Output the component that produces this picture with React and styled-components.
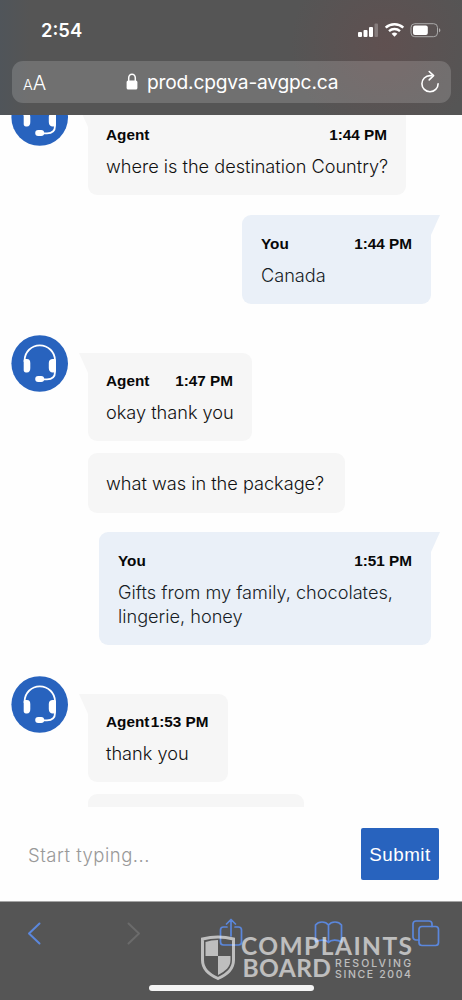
import React from "react";
import styled, { createGlobalStyle } from "styled-components";

const GlobalStyle = createGlobalStyle`
  * {
    box-sizing: border-box;
  }

  body {
    margin: 0;
    background: #fff;
    font-family: "Liberation Sans", Arial, sans-serif;
  }
`;

const Phone = styled.div`
  position: relative;
  display: flex;
  flex-direction: column;
  width: 462px;
  height: 1000px;
  overflow: hidden;
  background: #fefefe;
`;

const TopBar = styled.header`
  flex: none;
  height: 115px;
  padding: 0 11px 0 12px;
  color: #fff;
  background:
    radial-gradient(circle at 385px 45px, rgba(120, 70, 70, 0.3), transparent 95px),
    linear-gradient(90deg, #50555a 0, #555 30px, #555 100%);
  font-family: Inter, sans-serif;
`;

const StatusBar = styled.div`
  display: flex;
  align-items: center;
  justify-content: space-between;
  height: 60px;
  padding: 0 10px 0 29px;
`;

const Clock = styled.div`
  font-size: 18.4px;
  font-weight: 600;
`;

const StatusIcons = styled.div`
  display: flex;
`;

const AddressBar = styled.div`
  display: flex;
  align-items: center;
  height: 42px;
  margin-top: 1px;
  padding: 0 10px 0 11px;
  border-radius: 11px;
  background: rgba(255, 255, 255, 0.16);
`;

const TextSize = styled.div`
  width: 103px;
  padding-top: 1px;
  font-size: 20px;
  font-weight: 300;

  small {
    font-size: 14.5px;
  }
`;

const Url = styled.div`
  flex: 1;
  margin-left: 9px;
  font-size: 19.2px;
  letter-spacing: -0.2px;
`;

const Chat = styled.main`
  flex: none;
  height: 692px;
  overflow: hidden;
`;

const Group = styled.div`
  display: flex;
  margin-top: ${(props) => props.$top}px;
  padding-left: 11px;
`;

const Bubbles = styled.div`
  display: flex;
  flex-direction: column;
  gap: 11.5px;
  margin: 18px 0 0 20px;
`;

const Bubble = styled.div`
  position: relative;
  width: ${(props) => props.$width}px;
  padding: 16px 19px 17px 18px;
  border-radius: 9px;
  background: #f6f6f6;
  color: #111;

  &::before {
    content: "";
    display: ${(props) => (props.$tail ? "block" : "none")};
    position: absolute;
    top: 0;
    left: -9px;
    width: 24px;
    height: 20px;
    background: inherit;
    clip-path: polygon(0 0, 100% 0, 100% 100%, 9px 100%);
  }
`;

const UserBubble = styled(Bubble)`
  margin: ${(props) => props.$top}px 31px 0 auto;
  padding: 17px 19px 17px;
  background: #eaf0f8;
  color: #171d26;

  &::before {
    left: auto;
    right: -9px;
    clip-path: polygon(0 0, 100% 0, 15px 100%, 0 100%);
  }
`;

const Meta = styled.div`
  position: relative;
  display: flex;
  justify-content: space-between;
  margin-bottom: 7px;
  font-size: 15.3px;
  font-weight: 700;
  line-height: 24px;
  white-space: nowrap;
  color: #080808;
`;

const Message = styled.div`
  padding: ${(props) => (props.$single ? "2px 0 1px" : 0)};
  font-family: Inter, "Liberation Sans", sans-serif;
  font-size: 18.15px;
  font-weight: 300;
  line-height: 24px;
  white-space: pre;
`;

const Form = styled.form`
  display: flex;
  flex: none;
  align-items: center;
  height: 95px;
  padding: 0 23px 0 28px;
  border-bottom: 1px solid #a5a5a5;
  background: #fefefe;
`;

const Input = styled.input`
  flex: 1;
  min-width: 0;
  padding: 2px 0 0;
  border: 0;
  outline: 0;
  background: none;
  font-family: Inter, "Liberation Sans", sans-serif;
  font-size: 18.5px;
  font-weight: 300;
  letter-spacing: 0.5px;

  &::placeholder {
    color: #999;
  }
`;

const Submit = styled.button`
  width: 78px;
  height: 52px;
  padding: 2px 0 0;
  border: 0;
  border-radius: 2px;
  background: #2863be;
  color: #fff;
  font-family: "Liberation Sans", Arial, sans-serif;
  font-size: 18.8px;
  letter-spacing: 0.5px;
`;

const BottomBar = styled.footer`
  display: flex;
  flex: 1;
  flex-direction: column;
  align-items: center;
  justify-content: space-between;
  padding: 14px 22px 9px 27px;
  background: #555;
`;

const Tools = styled.nav`
  display: flex;
  align-items: center;
  justify-content: space-between;
  width: 100%;
`;

const HomeIndicator = styled.div`
  width: 165px;
  height: 6px;
  margin-right: 5px;
  border-radius: 3px;
  background: #f4f4f4;
`;

const Watermark = styled.svg`
  position: absolute;
  left: 200px;
  top: 930px;
  opacity: 0.62;
`;

const ToolIcon = ({ color = "#5b87dc", children }) => (
  <svg width="30" height="34" viewBox="0 0 30 34" fill="none" stroke={color}
    strokeWidth="1.7" strokeLinecap="round" strokeLinejoin="round">
    {children}
  </svg>
);

const Avatar = () => (
  <svg width="57" height="57" viewBox="0 0 57 57" fill="none">
    <circle cx="28.7" cy="28.5" r="28.3" fill="#2863be" />
    <path d="M13.6 27v-1.5a15.2 15.2 0 0 1 30.4 0V37c0 5-3 7.3-8 7.3h-5" stroke="#fff" strokeWidth="1.8" />
    <path d="M12.7 25.5c0-1 .6-1.5 1.6-1.5h1.6c2.4 0 3.4 1.6 3.4 4v5c0 2.8-1 4.5-3.4 4.5h-1c-1.4 0-2.2-1-2.2-2.2z" fill="#fff" />
    <path d="M44.9 25.5c0-1-.6-1.5-1.6-1.5h-1.6c-2.4 0-3.9 1.6-3.9 4v5c0 2.8 1.5 4.5 3.9 4.5h1c1.4 0 2.2-1 2.2-2.2z" fill="#fff" />
    <rect x="24.2" y="41" width="9" height="6" rx="3" fill="#fff" />
  </svg>
);

function AgentBubble({ time, width, tail, children }) {
  return (
    <Bubble $width={width} $tail={tail}>
      {time && <Meta><span>Agent</span><span>{time}</span></Meta>}
      <Message $single={!time}>{children}</Message>
    </Bubble>
  );
}

function YouBubble({ time, width, top, children }) {
  return (
    <UserBubble $width={width} $top={top} $tail>
      <Meta><span>You</span><span>{time}</span></Meta>
      <Message>{children}</Message>
    </UserBubble>
  );
}

function App() {
  return (
    <>
      <GlobalStyle />
      <Phone>
        <TopBar>
          <StatusBar>
            <Clock>2:54</Clock>
            <StatusIcons>
              <svg width="84" height="16" viewBox="0 0 84 16" fill="#fff">
                <rect x="1" y="10" width="4" height="5" rx="1" />
                <rect x="6.5" y="8" width="4" height="7" rx="1" />
                <rect x="12" y="5" width="4" height="10" rx="1" />
                <rect x="17.5" y="1.5" width="3.5" height="13.5" rx="1" opacity=".25" />
                <path d="M28.7 5.6a13 13 0 0 1 17.6 0" stroke="#fff" strokeWidth="2.5" fill="none" />
                <path d="M32 9.1a8.2 8.2 0 0 1 11 0" stroke="#fff" strokeWidth="2.4" fill="none" />
                <path d="M34.6 11.8a4.4 4.4 0 0 1 5.8 0L37.5 14.7z" />
                <rect x="54" y="1.7" width="26.5" height="13" rx="3.8" fill="none" stroke="#aaa" strokeWidth="1" />
                <rect x="56" y="3.6" width="14.8" height="9.4" rx="2" />
                <path d="M82 6.2c1.8.5 1.8 3.6 0 4.1z" opacity=".5" />
              </svg>
            </StatusIcons>
          </StatusBar>
          <AddressBar>
            <TextSize><small>A</small>A</TextSize>
            <svg width="12" height="18" viewBox="0 0 12 18">
              <path d="M2.7 8V5a3.3 3.8 0 0 1 6.6 0v3" fill="none" stroke="#fff" strokeWidth="1.5" />
              <rect x=".6" y="7.5" width="10.8" height="9" rx="1.6" fill="#fff" />
            </svg>
            <Url>prod.cpgva-avgpc.ca</Url>
            <svg width="22" height="26" viewBox="0 0 22 26" fill="none" stroke="#fff" strokeWidth="1.6">
              <path d="M12.6 6.6H11a8.1 8.1 0 1 0 8.1 8.1" strokeLinecap="round" />
              <path d="M10.2 2.5l4.4 4.2-4.4 4.2" strokeLinecap="round" strokeLinejoin="round" />
            </svg>
          </AddressBar>
        </TopBar>

        <Chat>
          <Group $top={-26}>
            <Avatar />
            <Bubbles>
              <AgentBubble time="1:44 PM" width={318} tail>where is the destination Country?</AgentBubble>
            </Bubbles>
          </Group>
          <YouBubble time="1:44 PM" width={189} top={20}>Canada</YouBubble>
          <Group $top={31}>
            <Avatar />
            <Bubbles>
              <AgentBubble time="1:47 PM" width={164} tail>okay thank you</AgentBubble>
              <AgentBubble width={257}>what was in the package?</AgentBubble>
            </Bubbles>
          </Group>
          <YouBubble time="1:51 PM" width={332} top={19.5}>
            {"Gifts from my family, chocolates,\nlingerie, honey"}
          </YouBubble>
          <Group $top={31}>
            <Avatar />
            <Bubbles>
              <AgentBubble time="1:53 PM" width={139.5} tail>thank you</AgentBubble>
              <AgentBubble width={216} />
            </Bubbles>
          </Group>
        </Chat>

        <Form onSubmit={(e) => e.preventDefault()}>
          <Input placeholder="Start typing..." />
          <Submit>Submit</Submit>
        </Form>

        <BottomBar>
          <Tools>
            <ToolIcon><path d="M12.5 7.5L2 17.5l10.5 10" strokeWidth="2" /></ToolIcon>
            <ToolIcon color="#6b6b6b"><path d="M5.5 7.5l10.5 10-10.5 10" strokeWidth="2" /></ToolIcon>
            <ToolIcon>
              <path d="M8 11H4.500a3 3 0 0 0-3 3v12a3 3 0 0 0 3 3h15a3 3 0 0 0 3-3V14a3 3 0 0 0-3-3H16M12 20V3.500M7.500 8L12 3.500 16.500 8" />
            </ToolIcon>
            <ToolIcon>
              <path d="M14.5 9v17.500c-2.500-3-9-3-13-.5V9c3-4 10-4 13 0c3-4 10-4 13 0v17c-4-2.500-10.500-2.500-13 .5" />
            </ToolIcon>
            <ToolIcon>
              <rect x="9" y="10.5" width="19.5" height="19" rx="3" />
              <path d="M9 24H6a3 3 0 0 1-3-3V8a3 3 0 0 1 3-3h13a3 3 0 0 1 3 3v2.500" />
            </ToolIcon>
          </Tools>
          <HomeIndicator />
        </BottomBar>

        <Watermark width="224" height="56" viewBox="0 0 224 56" fill="#fff" fontFamily="Lato, sans-serif">
          <path d="M2.5 9Q18 5 33.5 9V30c0 9-6 14-15.5 18.500C8.500 44 2.500 39 2.500 30z" fill="none" stroke="#fff" strokeWidth="3" />
          <path d="M18 10V26H5.500V12Q11 10 18 10zM18 26h12.500v4c0 7-5 11-12.500 15z" />
          <text x="41" y="24.7" fontSize="24.5" fontWeight="700" textLength="171">COMPLAINTS</text>
          <text x="42.5" y="47" fontSize="24.5" fontWeight="700" textLength="88.5">BOARD</text>
          <text x="135" y="37" fontSize="10.5" fontWeight="500" textLength="76" fontFamily="Inter, sans-serif">RESOLVING</text>
          <text x="135" y="48" fontSize="10.5" fontWeight="500" textLength="76" fontFamily="Inter, sans-serif">SINCE 2004</text>
        </Watermark>
      </Phone>
    </>
  );
}

export default App;
